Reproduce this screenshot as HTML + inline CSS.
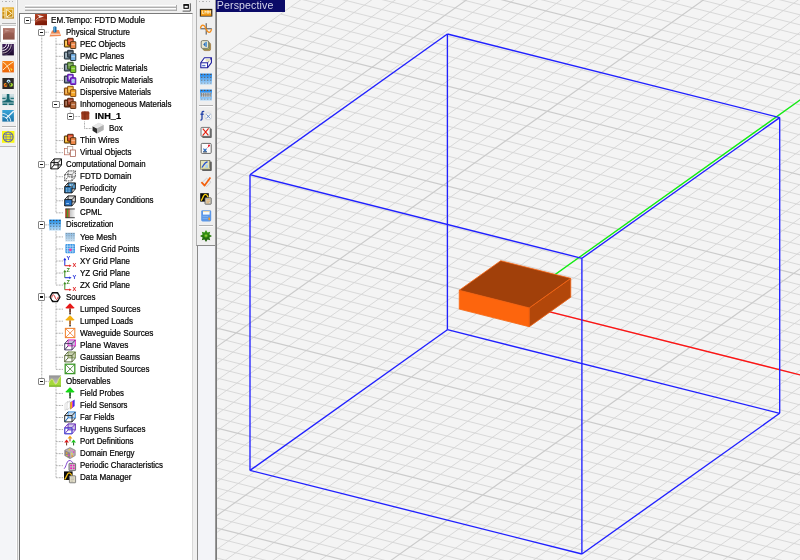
<!DOCTYPE html>
<html><head><meta charset="utf-8"><title>EM.Tempo</title><style>
html,body{margin:0;padding:0}
body{width:800px;height:560px;overflow:hidden;position:relative;background:#f4f4f4;font-family:"Liberation Sans",sans-serif}
div{position:absolute;box-sizing:border-box}
#ltb{left:0;top:0;width:16px;height:147px;background:#f0f0f0;border-bottom:1px solid #b9b9b9}
#ltb2{left:0;top:147px;width:16px;height:413px;background:#f4f5f8}
#lsep{left:16px;top:0;width:2.2px;height:560px;background:linear-gradient(90deg,#fdfdfd 0,#fdfdfd 50%,#c2c2c2 62%,#c2c2c2 100%)}
#tp{left:18px;top:0;width:179px;height:560px;background:#f0f0f0}
#tw{left:19.4px;top:13px;width:173.6px;height:560px;background:#fff;border-left:1.8px solid #727272;border-top:1.5px solid #7a7a7a;border-right:1px solid #d8d8d8}
#mtb{left:196px;top:0;width:20px;height:246px;background:#efefef;border-left:1.2px solid #b2b2b2;border-bottom:1.3px solid #8c8c8c}
#mtb2{left:196.6px;top:246px;width:19.4px;height:314px;background:#f3f4f8;border-left:1.5px solid #8a8a8a}
#vb{left:214.7px;top:0;width:2px;height:560px;background:linear-gradient(90deg,#a8a8a8,#6c6c6c)}
.grip{left:24.8px;width:152px;height:2.5px;background:linear-gradient(#fefefe 0%,#fefefe 38%,#b4b4b4 62%,#ababab 100%);border-right:1px solid #aaa}
.dots{height:1.4px;background:repeating-linear-gradient(90deg,#b4b4b4 0,#b4b4b4 1.2px,transparent 1.2px,transparent 3.4px)}
.sep{height:1.8px;background:linear-gradient(#b2b2b2 0,#b2b2b2 55%,#fcfcfc 56%)}
.eb{width:7.4px;height:7.4px;background:#fff;border:1.1px solid #858585;border-radius:1px;margin:-0.2px}
.eb i{position:absolute;left:1.1px;top:2px;width:3px;height:1.2px;background:#111}
.ic{width:12px;height:12px}
.ic svg{position:absolute;left:0;top:0;overflow:visible}
.tl{font-size:9px;line-height:12px;height:12px;white-space:pre;color:#000;-webkit-text-stroke:0.22px #000;transform-origin:0 50%}
.tl.b{font-weight:bold;color:#000}
#persp{left:216px;top:0;width:69px;height:11.7px;background:#0b0b68;color:#d4d4ea;filter:blur(0.25px);font-size:10.6px;line-height:11px;padding-left:0.8px;letter-spacing:0.12px;white-space:pre}
#tree{left:0;top:0;width:200px;height:560px;filter:blur(0.3px)}
#tbs{left:0;top:0;width:216px;height:560px;filter:blur(0.3px)}
#selbtn{left:0;top:25.4px;width:15.8px;height:16.2px;border-left:1px solid #b8b8b8;border-top:1.1px solid #cdcdcd;background:#fff}
</style></head><body>
<svg id="vp" width="800" height="560" viewBox="0 0 800 560" style="position:absolute;left:0;top:0">
<defs><clipPath id="vc"><rect x="217" y="0" width="583" height="560"/></clipPath></defs>
<g clip-path="url(#vc)" fill="none">
<path d="M-424.42 516.58L508.88 -148.52M-406.91 520.99L526.39 -144.11M-389.4 525.4L543.9 -139.7M-371.89 529.81L561.41 -135.29M-354.38 534.22L578.92 -130.88M-336.87 538.63L596.43 -126.47M-319.36 543.04L613.94 -122.06M-284.34 551.86L648.96 -113.24M-266.83 556.27L666.47 -108.83M-249.32 560.68L683.98 -104.42M-231.81 565.09L701.49 -100.01M-214.3 569.5L719 -95.6M-196.79 573.91L736.51 -91.19M-179.28 578.32L754.02 -86.78M-161.77 582.73L771.53 -82.37M-144.26 587.14L789.04 -77.96M-109.24 595.96L824.06 -69.14M-91.73 600.37L841.57 -64.73M-74.22 604.78L859.08 -60.32M-56.71 609.19L876.59 -55.91M-39.2 613.6L894.1 -51.5M-21.69 618.01L911.61 -47.09M-4.18 622.42L929.12 -42.68M13.33 626.83L946.63 -38.27M30.84 631.24L964.14 -33.86M65.86 640.06L999.16 -25.04M83.37 644.47L1016.67 -20.63M100.88 648.88L1034.18 -16.22M118.39 653.29L1051.69 -11.81M135.9 657.7L1069.2 -7.4M153.41 662.11L1086.71 -2.99M170.92 666.52L1104.22 1.42M188.43 670.93L1121.73 5.83M205.94 675.34L1139.24 10.24M240.96 684.16L1174.26 19.06M258.47 688.57L1191.77 23.47M275.98 692.98L1209.28 27.88M293.49 697.39L1226.79 32.29M311 701.8L1244.3 36.7M328.51 706.21L1261.81 41.11M346.02 710.62L1279.32 45.52M363.53 715.03L1296.83 49.93M381.04 719.44L1314.34 54.34M416.06 728.26L1349.36 63.16M433.57 732.67L1366.87 67.57M451.08 737.08L1384.38 71.98M468.59 741.49L1401.89 76.39M486.1 745.9L1419.4 80.8M503.61 750.31L1436.91 85.21M521.12 754.72L1454.42 89.62M538.63 759.13L1471.93 94.03M556.14 763.54L1489.44 98.44M591.16 772.36L1524.46 107.26M608.67 776.77L1541.97 111.67M626.18 781.18L1559.48 116.08M643.69 785.59L1576.99 120.49M661.2 790L1594.5 124.9M678.71 794.41L1612.01 129.31M696.22 798.82L1629.52 133.72M713.73 803.23L1647.03 138.13M731.24 807.64L1664.54 142.54M-424.42 516.58L748.75 812.05M-414.05 509.19L759.12 804.66M-403.68 501.8L769.49 797.27M-393.31 494.41L779.86 789.88M-382.94 487.02L790.23 782.49M-362.2 472.24L810.97 767.71M-351.83 464.85L821.34 760.32M-341.46 457.46L831.71 752.93M-331.09 450.07L842.08 745.54M-320.72 442.68L852.45 738.15M-310.35 435.29L862.82 730.76M-299.98 427.9L873.19 723.37M-289.61 420.51L883.56 715.98M-279.24 413.12L893.93 708.59M-258.5 398.34L914.67 693.81M-248.13 390.95L925.04 686.42M-237.76 383.56L935.41 679.03M-227.39 376.17L945.78 671.64M-217.02 368.78L956.15 664.25M-206.65 361.39L966.52 656.86M-196.28 354L976.89 649.47M-185.91 346.61L987.26 642.08M-175.54 339.22L997.63 634.69M-154.8 324.44L1018.37 619.91M-144.43 317.05L1028.74 612.52M-134.06 309.66L1039.11 605.13M-123.69 302.27L1049.48 597.74M-113.32 294.88L1059.85 590.35M-102.95 287.49L1070.22 582.96M-92.58 280.1L1080.59 575.57M-82.21 272.71L1090.96 568.18M-71.84 265.32L1101.33 560.79M-51.1 250.54L1122.07 546.01M-40.73 243.15L1132.44 538.62M-30.36 235.76L1142.81 531.23M-19.99 228.37L1153.18 523.84M-9.62 220.98L1163.55 516.45M0.75 213.59L1173.92 509.06M11.12 206.2L1184.29 501.67M21.49 198.81L1194.66 494.28M31.86 191.42L1205.03 486.89M52.6 176.64L1225.77 472.11M62.97 169.25L1236.14 464.72M73.34 161.86L1246.51 457.33M83.71 154.47L1256.88 449.94M94.08 147.08L1267.25 442.55M104.45 139.69L1277.62 435.16M114.82 132.3L1287.99 427.77M125.19 124.91L1298.36 420.38M135.56 117.52L1308.73 412.99M156.3 102.74L1329.47 398.21M166.67 95.35L1339.84 390.82M177.04 87.96L1350.21 383.43M187.41 80.57L1360.58 376.04M197.78 73.18L1370.95 368.65M208.15 65.79L1381.32 361.26M218.52 58.4L1391.69 353.87M228.89 51.01L1402.06 346.48M239.26 43.62L1412.43 339.09M260 28.84L1433.17 324.31M270.37 21.45L1443.54 316.92M280.74 14.06L1453.91 309.53M291.11 6.67L1464.28 302.14M301.48 -0.72L1474.65 294.75M311.85 -8.11L1485.02 287.36M322.22 -15.5L1495.39 279.97M332.59 -22.89L1505.76 272.58M342.96 -30.28L1516.13 265.19M363.7 -45.06L1536.87 250.41M374.07 -52.45L1547.24 243.02M384.44 -59.84L1557.61 235.63M394.81 -67.23L1567.98 228.24M405.18 -74.62L1578.35 220.85M415.55 -82.01L1588.72 213.46M425.92 -89.4L1599.09 206.07M436.29 -96.79L1609.46 198.68M446.66 -104.18L1619.83 191.29M467.4 -118.96L1640.57 176.51M477.77 -126.35L1650.94 169.12M488.14 -133.74L1661.31 161.73M498.51 -141.13L1671.68 154.34M508.88 -148.52L1682.05 146.95" stroke="#d3d3d3" stroke-width="0.85"/>
<path d="M-301.85 547.45L631.45 -117.65M-126.75 591.55L806.55 -73.55M48.35 635.65L981.65 -29.45M223.45 679.75L1156.75 14.65M398.55 723.85L1331.85 58.75M573.65 767.95L1506.95 102.85M748.75 812.05L1682.05 146.95M-372.57 479.63L800.6 775.1M-268.87 405.73L904.3 701.2M-165.17 331.83L1008 627.3M-61.47 257.93L1111.7 553.4M42.23 184.03L1215.4 479.5M145.93 110.13L1319.1 405.6M249.63 36.23L1422.8 331.7M353.33 -37.67L1526.5 257.8M457.03 -111.57L1630.2 183.9" stroke="#cbcbcb" stroke-width="1.15"/>
<path d="M515 303.1L929.8 7.5" stroke="#10f010" stroke-width="1.3"/>
<path d="M515 303.1L1215.4 479.5" stroke="#ff1212" stroke-width="1.4"/>
<path d="M447.4 34L447.4 329.7" stroke="#2020ff" stroke-width="1.35"/>
<path d="M250 174.7L250 470.4" stroke="#2020ff" stroke-width="1.35"/>
<path d="M779.7 117.6L779.7 413.3" stroke="#2020ff" stroke-width="1.35"/>
<path d="M581.9 258.3L581.9 554" stroke="#2020ff" stroke-width="1.35"/>
<path d="M447.4 34L250 174.7" stroke="#2020ff" stroke-width="1.35"/>
<path d="M447.4 34L779.7 117.6" stroke="#2020ff" stroke-width="1.35"/>
<path d="M250 174.7L581.9 258.3" stroke="#2020ff" stroke-width="1.35"/>
<path d="M779.7 117.6L581.9 258.3" stroke="#2020ff" stroke-width="1.35"/>
<path d="M447.4 329.7L250 470.4" stroke="#2020ff" stroke-width="1.35"/>
<path d="M447.4 329.7L779.7 413.3" stroke="#2020ff" stroke-width="1.35"/>
<path d="M250 470.4L581.9 554" stroke="#2020ff" stroke-width="1.35"/>
<path d="M779.7 413.3L581.9 554" stroke="#2020ff" stroke-width="1.35"/>
<path d="M459.24 290.26L529.28 307.9L529.28 326.7L459.24 309.06Z" fill="#fd650d" stroke="#fd650d" stroke-width="0.8" stroke-linejoin="round"/>
<path d="M529.28 307.9L570.76 278.34L570.76 297.14L529.28 326.7Z" fill="#b2470a" stroke="#f0600f" stroke-width="0.8" stroke-linejoin="round"/>
<path d="M459.24 290.26L529.28 307.9L570.76 278.34L500.72 260.7Z" fill="#a1400a" stroke="#f96310" stroke-width="0.8" stroke-linejoin="round"/>
</g>
</svg>
<div id="ltb"></div><div id="ltb2"></div><div id="lsep"></div>
<div id="tp"></div>
<div class="grip" style="top:5.2px"></div><div class="grip" style="top:8.3px"></div>
<svg width="10" height="10" viewBox="0 0 10 10" style="position:absolute;left:181.6px;top:2.9px"><rect x="0.4" y="0.3" width="8.2" height="7.9" fill="#fafafa"/><path d="M8.3 0.3V8.1H0.6" fill="none" stroke="#3c3c3c" stroke-width="0.9"/><rect x="2" y="2" width="4.3" height="3.3" fill="#fff" stroke="#000" stroke-width="1.1"/><rect x="1.45" y="1.2" width="5.4" height="1.3" fill="#000"/></svg>
<div id="tw"></div>
<div id="mtb"></div><div id="mtb2"></div>
<div id="vb"></div>
<div class="dots" style="left:2px;top:1px;width:13px"></div>
<div class="dots" style="left:199px;top:1px;width:14px"></div>
<div class="sep" style="left:1.5px;top:22.5px;width:14px"></div>
<div class="sep" style="left:1.5px;top:126px;width:14px"></div>
<div class="sep" style="left:199px;top:105px;width:14px"></div>
<div class="sep" style="left:199px;top:225.3px;width:14px"></div>
<div id="selbtn"></div>
<div id="tbs"><div class="ic" style="left:2px;top:6.6px"><svg width="12" height="12" viewBox="0 0 12 12"><defs><linearGradient id="l1" x1="0" y1="0" x2="0" y2="1"><stop offset="0" stop-color="#e8a818"/><stop offset="1" stop-color="#b87c08"/></linearGradient></defs><rect x="0.3" y="0.4" width="11.6" height="11.2" fill="url(#l1)"/><path d="M3 0.4V11.6" stroke="#fbe8b0" stroke-width="1.2"/><path d="M4.4 2L10.8 2.2V10L4.6 10.4Z" fill="none" stroke="#fbecc0" stroke-width="0.9"/><path d="M4.6 2.4L9.6 6.4L4.8 10" fill="none" stroke="#fff4d8" stroke-width="1"/><path d="M0.4 4.4H3M0.4 8H3" stroke="#fbe8b0" stroke-width="0.7"/></svg></div>
<div class="ic" style="left:2px;top:28.4px"><svg width="12" height="12" viewBox="0 0 12 12"><defs><linearGradient id="l2" x1="0" y1="0" x2="0" y2="1"><stop offset="0" stop-color="#a8685c"/><stop offset="1" stop-color="#8c5448"/></linearGradient></defs><rect x="1" y="0.2" width="11.6" height="11.4" fill="url(#l2)"/><path d="M3 1.4L8 2.4L3.4 3.6Z" fill="#e8d0c8"/><path d="M1 6.6C4 4 7 3.6 12.6 4.8V0.2H1Z" fill="#b47c70" opacity=".7"/></svg></div>
<div class="ic" style="left:2px;top:44.2px"><svg width="12" height="12" viewBox="0 0 12 12"><defs><linearGradient id="l3" x1="0" y1="0" x2="0" y2="1"><stop offset="0" stop-color="#3c1c58"/><stop offset="1" stop-color="#1c0c2c"/></linearGradient></defs><rect x="0.3" y="0" width="11.6" height="11.4" fill="url(#l3)"/><g fill="none" stroke="#f4f0f8" stroke-width="1"><path d="M0.4 4.2C2.6 4 4.2 2.4 4.4 0.2"/><path d="M0.4 6.6C4 6.4 6.6 3.8 6.8 0.2"/><path d="M0.6 9C5.4 8.8 9 5 9.2 0.4" stroke="#c8c0c0"/><path d="M0.8 11.2C6.8 11 11.2 6.4 11.4 0.6" stroke="#5c4c70" stroke-width="0.7"/></g></svg></div>
<div class="ic" style="left:2px;top:60.8px"><svg width="12" height="12" viewBox="0 0 12 12"><defs><linearGradient id="l4" x1="0" y1="0" x2="0" y2="1"><stop offset="0" stop-color="#f88418"/><stop offset="1" stop-color="#ec6408"/></linearGradient></defs><rect x="0.3" y="0" width="11.6" height="11.4" fill="url(#l4)"/><path d="M0.6 1C4 3 6 5 8 10.8M11.6 0.6C8 3 5 5 1 9" stroke="#fff0c8" stroke-width="1" fill="none"/><path d="M8.4 6.4L10.6 8.4L9 10Z" fill="#f8e040"/></svg></div>
<div class="ic" style="left:2px;top:77.8px"><svg width="12" height="12" viewBox="0 0 12 12"><rect x="0.4" y="0" width="11.4" height="11" fill="#2c2828"/><circle cx="6.6" cy="3.4" r="1.9" fill="#b8e4f8"/><circle cx="3.6" cy="7" r="1.9" fill="#f4a020"/><circle cx="3" cy="7.4" r="1" fill="#e84818"/><circle cx="9" cy="6.8" r="1.9" fill="#a8e030"/><path d="M6.6 3.4L3.6 7H9Z" fill="none" stroke="#181818" stroke-width="0.8"/></svg></div>
<div class="ic" style="left:2px;top:94.2px"><svg width="12" height="12" viewBox="0 0 12 12"><rect x="0.3" y="0" width="11.6" height="11.2" fill="#a8c8cc"/><path d="M0.3 0H11.9V2.6H0.3Z" fill="#d0e0e4"/><path d="M4.8 0H7.4V4.6C7.6 6.4 9.4 7.2 11.9 7.4V8.6H0.3V7.4C2.8 7.2 4.6 6.4 4.8 4.6Z" fill="#186870"/><path d="M0.3 4.4H3.6M8.6 4.4H11.9" stroke="#186870" stroke-width="1"/><path d="M0.6 10.2H5.2M6.8 10.2H11.6" stroke="#186870" stroke-width="1.6"/></svg></div>
<div class="ic" style="left:2px;top:110.2px"><svg width="12" height="12" viewBox="0 0 12 12"><defs><linearGradient id="l7" x1="0" y1="0" x2="0" y2="1"><stop offset="0" stop-color="#38a4d8"/><stop offset="1" stop-color="#1c74a8"/></linearGradient></defs><rect x="0.3" y="0" width="11.6" height="11.6" fill="url(#l7)"/><g fill="none" stroke="#e8f4fc"><path d="M0.4 3.4C4 3.4 8.6 7 8.8 11.4" stroke-width="1"/><path d="M0.4 6.4C3 6.4 5.8 8.6 6 11.4" stroke-width="0.9"/><path d="M11.8 1L4 8.4" stroke-width="1.4"/></g></svg></div>
<div class="ic" style="left:2px;top:131.2px"><svg width="12" height="12" viewBox="0 0 12 12"><rect x="0" y="0" width="12.4" height="11.8" fill="#f8f810"/><circle cx="6.2" cy="5.9" r="4.9" fill="none" stroke="#5c64a8" stroke-width="1.1"/><ellipse cx="6.2" cy="5.9" rx="2.2" ry="4.9" fill="none" stroke="#7c84b8" stroke-width="0.8"/><path d="M1.4 5.9H11M2.2 3.4H10.2M2.2 8.4H10.2" stroke="#6c74b0" stroke-width="0.8"/></svg></div>
<div class="ic" style="left:200px;top:9px"><svg width="12" height="12" viewBox="0 0 12 12"><rect x="0.4" y="0.4" width="11.4" height="6.6" fill="#f4a420" stroke="#241c10" stroke-width="1.1"/><path d="M2.4 1.6V4.6H3.8M5 4.6V1.8L6.2 3.4L7.4 1.8V4.6M8.4 4.6V1.8L9.4 3.4L10.4 1.8V4.6" fill="none" stroke="#fdf0d0" stroke-width="0.8"/><rect x="0.8" y="5.6" width="10.6" height="1.2" fill="#e88c10"/></svg></div>
<div class="ic" style="left:200px;top:23px"><svg width="12" height="12" viewBox="0 0 12 12"><path d="M0.4 5.8H11.8M6.2 0.2V11.6" stroke="#383838" stroke-width="0.9"/><path d="M0.4 5.4C1.4 1 4 1 6 5.8S10.6 10.4 11.6 6.2" fill="none" stroke="#f48c18" stroke-width="1.3"/></svg></div>
<div class="ic" style="left:200px;top:40px"><svg width="12" height="12" viewBox="0 0 12 12"><rect x="3.4" y="3" width="7.2" height="7.6" rx="1.4" fill="#c89448" stroke="#8c6830" stroke-width="0.6"/><rect x="2.4" y="2" width="7.2" height="7.6" rx="1.4" fill="#a8b868" stroke="#707840" stroke-width="0.6"/><rect x="1.2" y="0.6" width="7.4" height="7.8" rx="1.4" fill="#e8e8d0" stroke="#787868" stroke-width="0.9"/><path d="M5.6 1.8L3.2 4.4L5.6 7Z" fill="#2c6cb8"/><rect x="5.8" y="1.8" width="1.2" height="5.2" fill="#58a0d8"/></svg></div>
<div class="ic" style="left:200px;top:56.6px"><svg width="12" height="12" viewBox="0 0 12 12"><path d="M4.4 0.8H11.4V5.6L7.6 10.8H0.8V5.8Z" fill="#fff" stroke="#1c1c9c" stroke-width="1.1" stroke-linejoin="round"/><path d="M0.8 5.8H7.6V10.8M7.6 5.8L11.4 0.8" fill="none" stroke="#1c1c9c" stroke-width="1"/><rect x="5.6" y="2" width="4.6" height="2.6" fill="#e8e4c0"/><path d="M2.2 8.6H5.4" stroke="#5878d0" stroke-width="1.4"/></svg></div>
<div class="ic" style="left:200px;top:72.8px"><svg width="12" height="12" viewBox="0 0 12 12"><defs><linearGradient id="gm1" x1="0" y1="0" x2="0" y2="1"><stop offset="0" stop-color="#1484f0"/><stop offset="1" stop-color="#b8dcf8"/></linearGradient></defs><rect x="0" y="0.6" width="12" height="11" fill="url(#gm1)"/><rect x="1.1" y="0.9" width="1.2" height="1.1" fill="#6c4c34" opacity="1.0"/><rect x="4.1" y="0.9" width="1.2" height="1.1" fill="#6c4c34" opacity="1.0"/><rect x="7.1" y="0.9" width="1.2" height="1.1" fill="#6c4c34" opacity="1.0"/><rect x="10.1" y="0.9" width="1.2" height="1.1" fill="#6c4c34" opacity="1.0"/><rect x="1.1" y="3.8" width="1.2" height="1.1" fill="#6c4c34" opacity="0.8"/><rect x="4.1" y="3.8" width="1.2" height="1.1" fill="#6c4c34" opacity="0.8"/><rect x="7.1" y="3.8" width="1.2" height="1.1" fill="#6c4c34" opacity="0.8"/><rect x="10.1" y="3.8" width="1.2" height="1.1" fill="#6c4c34" opacity="0.8"/><rect x="1.1" y="6.7" width="1.2" height="1.1" fill="#6c4c34" opacity="0.6"/><rect x="4.1" y="6.7" width="1.2" height="1.1" fill="#6c4c34" opacity="0.6"/><rect x="7.1" y="6.7" width="1.2" height="1.1" fill="#6c4c34" opacity="0.6"/><rect x="10.1" y="6.7" width="1.2" height="1.1" fill="#6c4c34" opacity="0.6"/><rect x="1.1" y="9.6" width="1.2" height="1.1" fill="#6c4c34" opacity="0.3999999999999999"/><rect x="4.1" y="9.6" width="1.2" height="1.1" fill="#6c4c34" opacity="0.3999999999999999"/><rect x="7.1" y="9.6" width="1.2" height="1.1" fill="#6c4c34" opacity="0.3999999999999999"/><rect x="10.1" y="9.6" width="1.2" height="1.1" fill="#6c4c34" opacity="0.3999999999999999"/></svg></div>
<div class="ic" style="left:200px;top:89.2px"><svg width="12" height="12" viewBox="0 0 12 12"><defs><linearGradient id="gm2" x1="0" y1="0" x2="0" y2="1"><stop offset="0" stop-color="#1484f0"/><stop offset="1" stop-color="#b8dcf8"/></linearGradient></defs><rect x="0" y="0.6" width="12" height="11" fill="url(#gm2)"/><rect x="1.1" y="0.9" width="1.2" height="1.1" fill="#6c4c34" opacity="1.0"/><rect x="4.1" y="0.9" width="1.2" height="1.1" fill="#6c4c34" opacity="1.0"/><rect x="7.1" y="0.9" width="1.2" height="1.1" fill="#6c4c34" opacity="1.0"/><rect x="10.1" y="0.9" width="1.2" height="1.1" fill="#6c4c34" opacity="1.0"/><rect x="1.1" y="3.8" width="1.2" height="1.1" fill="#6c4c34" opacity="0.8"/><rect x="4.1" y="3.8" width="1.2" height="1.1" fill="#6c4c34" opacity="0.8"/><rect x="7.1" y="3.8" width="1.2" height="1.1" fill="#6c4c34" opacity="0.8"/><rect x="10.1" y="3.8" width="1.2" height="1.1" fill="#6c4c34" opacity="0.8"/><rect x="1.1" y="6.7" width="1.2" height="1.1" fill="#6c4c34" opacity="0.6"/><rect x="4.1" y="6.7" width="1.2" height="1.1" fill="#6c4c34" opacity="0.6"/><rect x="7.1" y="6.7" width="1.2" height="1.1" fill="#6c4c34" opacity="0.6"/><rect x="10.1" y="6.7" width="1.2" height="1.1" fill="#6c4c34" opacity="0.6"/><rect x="1.1" y="9.6" width="1.2" height="1.1" fill="#6c4c34" opacity="0.3999999999999999"/><rect x="4.1" y="9.6" width="1.2" height="1.1" fill="#6c4c34" opacity="0.3999999999999999"/><rect x="7.1" y="9.6" width="1.2" height="1.1" fill="#6c4c34" opacity="0.3999999999999999"/><rect x="10.1" y="9.6" width="1.2" height="1.1" fill="#6c4c34" opacity="0.3999999999999999"/><rect x="0.6" y="3.6" width="10.8" height="4.4" fill="#c8d0d8" opacity=".85"/><path d="M1.4 4V7.6M3.6 4V7.6M5.8 4V7.6M8 4V7.6M10.2 4V7.6" stroke="#787068" stroke-width="0.8"/><path d="M1.4 5.8H10.4" stroke="#8c8478" stroke-width="0.6"/></svg></div>
<div class="ic" style="left:200px;top:110.4px"><svg width="12" height="12" viewBox="0 0 12 12"><rect x="0.2" y="0.4" width="11.6" height="10" fill="#e9e9e9" opacity=".8"/><path d="M4.2 1.6C2.8 1 2 1.8 2 3V8.6C2 9.8 1.4 10.2 0.4 9.8M0.5 4.2H3.6" fill="none" stroke="#2444a8" stroke-width="1.35"/><rect x="5" y="3" width="6.6" height="6.6" rx="2.6" fill="#f6f6f6" stroke="#c0c8d0" stroke-width="0.6"/><path d="M6.4 4.4L10.2 8.4M10.2 4.4L6.4 8.4" stroke="#5c84c4" stroke-width="0.9"/></svg></div>
<div class="ic" style="left:200px;top:126.8px"><svg width="12" height="12" viewBox="0 0 12 12"><rect x="2.2" y="1.6" width="9.6" height="9.4" rx="1" fill="#686868"/><rect x="1" y="0.4" width="9.2" height="9" rx="0.8" fill="#f4f8f8" stroke="#585858" stroke-width="0.8"/><path d="M2.8 1.6L8.4 8.4M8.6 1.4L2.6 8.6" stroke="#e42010" stroke-width="1.1"/></svg></div>
<div class="ic" style="left:200px;top:143.4px"><svg width="12" height="12" viewBox="0 0 12 12"><rect x="1.2" y="0.4" width="10" height="10" rx="1" fill="#fcfcfc" stroke="#686868" stroke-width="1"/><path d="M3.4 5.6L6.6 9M6.6 5.6L3.4 9" stroke="#2c6cc0" stroke-width="1.1"/><rect x="3.4" y="8.6" width="3.2" height="0.8" fill="#303030"/><circle cx="9" cy="2.6" r="1" fill="#e81828"/><path d="M7.6 4.6L9.4 2.6" stroke="#e81828" stroke-width="0.9"/></svg></div>
<div class="ic" style="left:200px;top:159.6px"><svg width="12" height="12" viewBox="0 0 12 12"><rect x="2" y="1.6" width="9.8" height="9.4" rx="1" fill="#606060"/><rect x="0.6" y="0.4" width="9.2" height="8.8" fill="#e4e4b8" stroke="#70705c" stroke-width="0.8"/><path d="M1.8 7.6C3.4 6 4.4 2 7.6 1.8" stroke="#2c54d0" stroke-width="1.2" fill="none"/><rect x="5.4" y="4.6" width="2.6" height="3.4" fill="#a8d0f0"/><rect x="0.6" y="7.8" width="9.2" height="1.2" fill="#d0d098"/></svg></div>
<div class="ic" style="left:200px;top:176.8px"><svg width="12" height="12" viewBox="0 0 12 12"><path d="M6.6 1.2L11 5.2L6.6 9.6L2.4 5.2Z" fill="#ececec" stroke="#b8b8c0" stroke-width="0.6"/><path d="M1.4 5.2L4.6 8.6L10.4 0.6" fill="none" stroke="#f4600c" stroke-width="1.7" stroke-linejoin="round"/></svg></div>
<div class="ic" style="left:200px;top:192.8px"><svg width="12" height="12" viewBox="0 0 12 12"><rect x="0.2" y="0.2" width="8.6" height="8.4" fill="#080808"/><path d="M1 7.6C2.6 6.6 3.2 1.4 5.2 1.4S7.6 3 8.2 4.4" stroke="#f8d010" stroke-width="1.4" fill="none"/><rect x="5" y="4.8" width="6.2" height="6.4" rx="0.5" fill="#d8d4c4" stroke="#505050" stroke-width="0.8"/><path d="M6.4 6.6H10M6.4 8.2H10M6.4 9.8H9" stroke="#e89838" stroke-width="0.6"/></svg></div>
<div class="ic" style="left:200px;top:209.6px"><svg width="12" height="12" viewBox="0 0 12 12"><rect x="1.2" y="0.2" width="10" height="11.2" rx="1.4" fill="#5c98e8"/><rect x="3" y="1.2" width="6.6" height="3.4" fill="#f8fcff"/><path d="M3 1.6H9.6" stroke="#f4c878" stroke-width="0.7"/><rect x="8.4" y="7.6" width="1.6" height="2.6" fill="#f49820"/><path d="M2.6 6.4H8M2.6 8.4H7.6" stroke="#88b8f0" stroke-width="0.8"/></svg></div>
<div class="ic" style="left:200px;top:230.4px"><svg width="12" height="12" viewBox="0 0 12 12"><defs><linearGradient id="ms" x1="0" y1="0" x2="0" y2="1"><stop offset="0" stop-color="#3ca018"/><stop offset="1" stop-color="#185808"/></linearGradient></defs><path d="M6 0L7.5 2.6L10.2 1.8L9.4 4.5L12 6L9.4 7.5L10.2 10.2L7.5 9.4L6 12L4.5 9.4L1.8 10.2L2.6 7.5L0 6L2.6 4.5L1.8 1.8L4.5 2.6Z" fill="url(#ms)"/><circle cx="6" cy="5.8" r="1.8" fill="#58b020"/><circle cx="6" cy="5.8" r="0.7" fill="#c0e048"/></svg></div></div>
<div id="tree"><svg width="200" height="560" viewBox="0 0 200 560" style="position:absolute;left:0;top:0"><path d="M41.75 26L41.75 381.4M56 38.24L56 152.64M56 44.28L63.5 44.28M56 56.32L63.5 56.32M56 68.36L63.5 68.36M56 80.4L63.5 80.4M56 92.44L63.5 92.44M56 104.48L63.5 104.48M56 140.6L63.5 140.6M56 152.64L63.5 152.64M56 170.68L56 212.84M56 176.72L63.5 176.72M56 188.76L63.5 188.76M56 200.8L63.5 200.8M56 212.84L63.5 212.84M56 230.88L56 285.08M56 236.92L63.5 236.92M56 248.96L63.5 248.96M56 261L63.5 261M56 273.04L63.5 273.04M56 285.08L63.5 285.08M56 303.12L56 369.36M56 309.16L63.5 309.16M56 321.2L63.5 321.2M56 333.24L63.5 333.24M56 345.28L63.5 345.28M56 357.32L63.5 357.32M56 369.36L63.5 369.36M56 387.4L56 477.72M56 393.44L63.5 393.44M56 405.48L63.5 405.48M56 417.52L63.5 417.52M56 429.56L63.5 429.56M56 441.6L63.5 441.6M56 453.64L63.5 453.64M56 465.68L63.5 465.68M56 477.72L63.5 477.72M41.75 32.24L49 32.24M41.75 164.68L49 164.68M41.75 224.88L49 224.88M41.75 297.12L49 297.12M41.75 381.4L49 381.4M31 20.2L35 20.2M70.25 110.48L70.25 116.52M70.25 116.52L80 116.52M84.5 121.52L84.5 128.56M84.5 128.56L91.5 128.56" stroke="#9c9c9c" stroke-width="1" stroke-dasharray="0.8 0.7" fill="none"/></svg>
<div class="eb" style="left:24px;top:16.7px"><i></i></div>
<div class="ic" style="left:35px;top:13.9px"><svg width="12" height="12" viewBox="0 0 12 12"><defs><linearGradient id="ge" x1="0" y1="0" x2="0.3" y2="1"><stop offset="0" stop-color="#b84828"/><stop offset="0.5" stop-color="#982c14"/><stop offset="1" stop-color="#7c1a08"/></linearGradient></defs><g transform="translate(0,0)"><rect x="0" y="0" width="12" height="11.2" fill="url(#ge)"/><path d="M0 7.4C3 4.4 6.5 3.6 12 5V7C7 5.4 3.6 6 0 9Z" fill="#b45a40" opacity=".75"/><path d="M2.2 0.8L9 2.6L3.4 4.2L4.2 2.8Z" fill="#f8ece8"/><path d="M3.6 3.6L0.6 6.2" stroke="#e8c8bc" stroke-width="0.8"/></g></svg></div>
<div class="tl" style="left:51px;top:13.8px;transform:scaleX(0.9036)">EM.Tempo: FDTD Module</div>
<div class="eb" style="left:38.25px;top:28.74px"><i></i></div>
<div class="ic" style="left:49.25px;top:25.94px"><svg width="12" height="12" viewBox="0 0 12 12"><path d="M3 4.5L10 4L12 10L0.5 10.5Z" fill="#f08850"/><path d="M1.5 8.2H10.8" stroke="#fbe0d0" stroke-width="1.2"/><rect x="4.3" y="0.5" width="3.2" height="6" rx="1" fill="#1c6ca8"/><rect x="5" y="0.8" width="1" height="5" fill="#58a8d8"/></svg></div>
<div class="tl" style="left:65.5px;top:25.84px;transform:scaleX(0.8824)">Physical Structure</div>
<div class="ic" style="left:63.5px;top:37.98px"><svg width="12" height="12" viewBox="0 0 12 12"><rect x="0.4" y="2" width="5.6" height="7" rx="0.3" fill="#f4b01c" stroke="#3a2408" stroke-width="1"/><rect x="1.4" y="3" width="1.6" height="4.6" fill="#fff" opacity=".35"/><rect x="3.6" y="0.3" width="5.6" height="6.8" rx="0.3" fill="#e4502c" stroke="#4a1c08" stroke-width="0.9"/><rect x="4.4" y="2.4" width="4" height="1.2" fill="#fff" opacity=".4"/><rect x="6.6" y="3.7" width="5.2" height="6.8" rx="0.3" fill="#f08848" stroke="#4a2c0c" stroke-width="0.9"/><rect x="7.4" y="6" width="3.6" height="1.2" fill="#fff" opacity=".4"/></svg></div>
<div class="tl" style="left:79.5px;top:37.88px;transform:scaleX(0.8830)">PEC Objects</div>
<div class="ic" style="left:63.5px;top:50.02px"><svg width="12" height="12" viewBox="0 0 12 12"><rect x="0.4" y="2" width="5.6" height="7" rx="0.3" fill="#7890a0" stroke="#1c2830" stroke-width="1"/><rect x="1.4" y="3" width="1.6" height="4.6" fill="#fff" opacity=".35"/><rect x="3.6" y="0.3" width="5.6" height="6.8" rx="0.3" fill="#485868" stroke="#1c2830" stroke-width="0.9"/><rect x="4.4" y="2.4" width="4" height="1.2" fill="#fff" opacity=".4"/><rect x="6.6" y="3.7" width="5.2" height="6.8" rx="0.3" fill="#78b4e8" stroke="#1c2830" stroke-width="0.9"/><rect x="7.4" y="6" width="3.6" height="1.2" fill="#fff" opacity=".4"/></svg></div>
<div class="tl" style="left:79.5px;top:49.92px;transform:scaleX(0.8844)">PMC Planes</div>
<div class="ic" style="left:63.5px;top:62.06px"><svg width="12" height="12" viewBox="0 0 12 12"><rect x="0.4" y="2" width="5.6" height="7" rx="0.3" fill="#68788c" stroke="#1c2c30" stroke-width="1"/><rect x="1.4" y="3" width="1.6" height="4.6" fill="#fff" opacity=".35"/><rect x="3.6" y="0.3" width="5.6" height="6.8" rx="0.3" fill="#6c9c48" stroke="#2c4c1c" stroke-width="0.9"/><rect x="4.4" y="2.4" width="4" height="1.2" fill="#fff" opacity=".4"/><rect x="6.6" y="3.7" width="5.2" height="6.8" rx="0.3" fill="#7cc824" stroke="#2c4c1c" stroke-width="0.9"/><rect x="7.4" y="6" width="3.6" height="1.2" fill="#fff" opacity=".4"/></svg></div>
<div class="tl" style="left:79.5px;top:61.96px;transform:scaleX(0.8878)">Dielectric Materials</div>
<div class="ic" style="left:63.5px;top:74.1px"><svg width="12" height="12" viewBox="0 0 12 12"><rect x="0.4" y="2" width="5.6" height="7" rx="0.3" fill="#60708c" stroke="#1c2430" stroke-width="1"/><rect x="1.4" y="3" width="1.6" height="4.6" fill="#fff" opacity=".35"/><rect x="3.6" y="0.3" width="5.6" height="6.8" rx="0.3" fill="#8030d8" stroke="#5010a0" stroke-width="0.9"/><rect x="4.4" y="2.4" width="4" height="1.2" fill="#fff" opacity=".4"/><rect x="4.8" y="1.6" width="3.2" height="3.8" fill="#d8d0f0"/><rect x="6.6" y="3.7" width="5.2" height="6.8" rx="0.3" fill="#8838e0" stroke="#5010a0" stroke-width="0.9"/><rect x="7.4" y="6" width="3.6" height="1.2" fill="#fff" opacity=".4"/><rect x="7.7" y="5" width="3" height="4" fill="#a8c8f0"/></svg></div>
<div class="tl" style="left:79.5px;top:74px;transform:scaleX(0.8739)">Anisotropic Materials</div>
<div class="ic" style="left:63.5px;top:86.14px"><svg width="12" height="12" viewBox="0 0 12 12"><rect x="0.4" y="2" width="5.6" height="7" rx="0.3" fill="#e89420" stroke="#703808" stroke-width="1"/><rect x="1.4" y="3" width="1.6" height="4.6" fill="#fff" opacity=".35"/><rect x="3.6" y="0.3" width="5.6" height="6.8" rx="0.3" fill="#f4b838" stroke="#804008" stroke-width="0.9"/><rect x="4.4" y="2.4" width="4" height="1.2" fill="#fff" opacity=".4"/><rect x="6.6" y="3.7" width="5.2" height="6.8" rx="0.3" fill="#f4a424" stroke="#804008" stroke-width="0.9"/><rect x="7.4" y="6" width="3.6" height="1.2" fill="#fff" opacity=".4"/></svg></div>
<div class="tl" style="left:79.5px;top:86.04px;transform:scaleX(0.8762)">Dispersive Materials</div>
<div class="eb" style="left:52.5px;top:100.98px"><i></i></div>
<div class="ic" style="left:63.5px;top:98.18px"><svg width="12" height="12" viewBox="0 0 12 12"><rect x="0.4" y="2" width="5.6" height="7" rx="0.3" fill="#7c3410" stroke="#3c1404" stroke-width="1"/><rect x="1.4" y="3" width="1.6" height="4.6" fill="#fff" opacity=".35"/><rect x="3.6" y="0.3" width="5.6" height="6.8" rx="0.3" fill="#a8442c" stroke="#4c1c08" stroke-width="0.9"/><rect x="4.4" y="2.4" width="4" height="1.2" fill="#fff" opacity=".4"/><rect x="6.6" y="3.7" width="5.2" height="6.8" rx="0.3" fill="#b86838" stroke="#5c2808" stroke-width="0.9"/><rect x="7.4" y="6" width="3.6" height="1.2" fill="#fff" opacity=".4"/></svg></div>
<div class="tl" style="left:79.5px;top:98.08px;transform:scaleX(0.8835)">Inhomogeneous Materials</div>
<div class="eb" style="left:66.75px;top:113.02px"><i></i></div>
<div class="ic" style="left:80.5px;top:110.22px"><svg width="12" height="12" viewBox="0 0 12 12"><rect x="0.3" y="1.5" width="8" height="8.2" rx="1.2" fill="#9c3c20"/><rect x="3.4" y="1.5" width="1" height="8.2" fill="#7c2c14"/><rect x="0.3" y="1.5" width="8" height="3" rx="1.2" fill="#8a3018" opacity=".6"/></svg></div>
<div class="tl b" style="left:94.5px;top:110.12px;transform:scaleX(1.0190)">INH_1</div>
<div class="ic" style="left:92px;top:122.26px"><svg width="12" height="12" viewBox="0 0 12 12"><path d="M0.6 4.2L6.8 0.8L11.6 3L11.6 8L5 11.4L0.6 8.8Z" fill="#d4d4d4"/><path d="M0.6 4.2L5 6.4V11.4L0.6 8.8Z" fill="#2c2c2c"/><path d="M0.6 4.2L6.8 0.8L11.6 3L5 6.4Z" fill="#e8e8e8"/><path d="M5 6.4L11.6 3V8L5 11.4Z" fill="#b0b0b0"/></svg></div>
<div class="tl" style="left:108.75px;top:122.16px;transform:scaleX(0.8862)">Box</div>
<div class="ic" style="left:63.5px;top:134.3px"><svg width="12" height="12" viewBox="0 0 12 12"><rect x="0.4" y="2" width="5.6" height="7" rx="0.3" fill="#f4b01c" stroke="#3a2408" stroke-width="1"/><rect x="1.4" y="3" width="1.6" height="4.6" fill="#fff" opacity=".35"/><rect x="3.6" y="0.3" width="5.6" height="6.8" rx="0.3" fill="#e4502c" stroke="#4a1c08" stroke-width="0.9"/><rect x="4.4" y="2.4" width="4" height="1.2" fill="#fff" opacity=".4"/><rect x="6.6" y="3.7" width="5.2" height="6.8" rx="0.3" fill="#f08848" stroke="#4a2c0c" stroke-width="0.9"/><rect x="7.4" y="6" width="3.6" height="1.2" fill="#fff" opacity=".4"/></svg></div>
<div class="tl" style="left:79.5px;top:134.2px;transform:scaleX(0.9066)">Thin Wires</div>
<div class="ic" style="left:63.5px;top:146.34px"><svg width="12" height="12" viewBox="0 0 12 12"><rect x="0.5" y="2.4" width="5" height="6.4" fill="#fff" stroke="#b86858" stroke-width="0.7"/><rect x="3.6" y="0.5" width="5.2" height="6.4" fill="#fff" stroke="#a89088" stroke-width="0.7"/><rect x="6.3" y="4" width="5.2" height="6.6" fill="#fff" stroke="#a05040" stroke-width="0.7"/></svg></div>
<div class="tl" style="left:79.5px;top:146.24px;transform:scaleX(0.8825)">Virtual Objects</div>
<div class="eb" style="left:38.25px;top:161.18px"><i></i></div>
<div class="ic" style="left:49.25px;top:158.38px"><svg width="12" height="12" viewBox="0 0 12 12"><g transform="translate(1.1,0)"><path d="M4 0.9H11.4V6.9H4Z" fill="#f0f0f0" stroke="#111" stroke-width="1"/><path d="M0.7 4.6L4 0.9M8 4.6L11.4 0.9M8 10.9L11.4 6.9M0.7 10.9L4 6.9" fill="none" stroke="#111" stroke-width="1"/><path d="M0.7 4.6H8V10.9H0.7Z" fill="none" stroke="#111" stroke-width="1"/></g></svg></div>
<div class="tl" style="left:65.5px;top:158.28px;transform:scaleX(0.8684)">Computational Domain</div>
<div class="ic" style="left:63.5px;top:170.42px"><svg width="12" height="12" viewBox="0 0 12 12"><path d="M4 0.9H11.4V6.9H4Z" fill="#f0f0f0" stroke="#444" stroke-width="0.9" stroke-dasharray="1.6 0.7"/><path d="M0.7 4.6L4 0.9M8 4.6L11.4 0.9M8 10.9L11.4 6.9M0.7 10.9L4 6.9" fill="none" stroke="#444" stroke-width="0.9" stroke-dasharray="1.6 0.7"/><path d="M0.7 4.6H8V10.9H0.7Z" fill="none" stroke="#444" stroke-width="0.9" stroke-dasharray="1.6 0.7"/></svg></div>
<div class="tl" style="left:79.5px;top:170.32px;transform:scaleX(0.8954)">FDTD Domain</div>
<div class="ic" style="left:63.5px;top:182.46px"><svg width="12" height="12" viewBox="0 0 12 12"><path d="M4 0.9H11.4V6.9H4Z" fill="#58a0d4" stroke="#111" stroke-width="0.9"/><path d="M0.7 4.6L4 0.9M8 4.6L11.4 0.9M8 10.9L11.4 6.9M0.7 10.9L4 6.9" fill="none" stroke="#111" stroke-width="0.9"/><path d="M0.7 4.6H8V10.9H0.7Z" fill="#2878b8" stroke="#111" stroke-width="0.9"/><g fill="#e8f4fc"><rect x="2.2" y="6.4" width="1" height="1"/><rect x="4.6" y="6.4" width="1" height="1"/><rect x="2.2" y="8.6" width="1" height="1"/><rect x="4.6" y="8.6" width="1" height="1"/><rect x="6" y="2.6" width="1" height="1"/><rect x="8.4" y="2.6" width="1" height="1"/><rect x="6.6" y="4.4" width="1" height="1"/></g></svg></div>
<div class="tl" style="left:79.5px;top:182.36px;transform:scaleX(0.8792)">Periodicity</div>
<div class="ic" style="left:63.5px;top:194.5px"><svg width="12" height="12" viewBox="0 0 12 12"><path d="M4 0.9H11.4V6.9H4Z" fill="#d8d8d8" stroke="#111" stroke-width="0.9"/><path d="M0.7 4.6L4 0.9M8 4.6L11.4 0.9M8 10.9L11.4 6.9M0.7 10.9L4 6.9" fill="none" stroke="#111" stroke-width="0.9"/><path d="M0.7 4.6H8V10.9H0.7Z" fill="#2470c4" stroke="#111" stroke-width="0.9"/><path d="M2.2 8.6H5" stroke="#bfe0ff" stroke-width="0.8"/></svg></div>
<div class="tl" style="left:79.5px;top:194.4px;transform:scaleX(0.8796)">Boundary Conditions</div>
<div class="ic" style="left:63.5px;top:206.54px"><svg width="12" height="12" viewBox="0 0 12 12"><defs><linearGradient id="gc" x1="0" y1="0" x2="1" y2="0"><stop offset="0" stop-color="#9a9a9a"/><stop offset="1" stop-color="#f4f4f4"/></linearGradient></defs><rect x="1.4" y="1.8" width="9.4" height="9" fill="url(#gc)"/><rect x="1.4" y="1.8" width="1.5" height="9" fill="#b03818"/><rect x="2.9" y="1.8" width="1.4" height="9" fill="#48a028"/><rect x="4.3" y="1.8" width="1.3" height="9" fill="#b84820"/><rect x="1.4" y="1.5" width="9.4" height="0.9" fill="#333"/><rect x="1.4" y="10.3" width="9.4" height="0.9" fill="#333"/></svg></div>
<div class="tl" style="left:79.5px;top:206.44px;transform:scaleX(0.8795)">CPML</div>
<div class="eb" style="left:38.25px;top:221.38px"><i></i></div>
<div class="ic" style="left:49.25px;top:218.58px"><svg width="12" height="12" viewBox="0 0 12 12"><defs><linearGradient id="gd1" x1="0" y1="0" x2="0" y2="1"><stop offset="0" stop-color="#1c8ce8"/><stop offset="1" stop-color="#c4e2f8"/></linearGradient></defs><rect x="0" y="0.6" width="12" height="11" fill="url(#gd1)"/><rect x="1.1" y="0.9" width="1.2" height="1.1" fill="#3c3c3c" opacity="1.0"/><rect x="4.1" y="0.9" width="1.2" height="1.1" fill="#3c3c3c" opacity="1.0"/><rect x="7.1" y="0.9" width="1.2" height="1.1" fill="#3c3c3c" opacity="1.0"/><rect x="10.1" y="0.9" width="1.2" height="1.1" fill="#3c3c3c" opacity="1.0"/><rect x="1.1" y="3.8" width="1.2" height="1.1" fill="#3c3c3c" opacity="0.8"/><rect x="4.1" y="3.8" width="1.2" height="1.1" fill="#3c3c3c" opacity="0.8"/><rect x="7.1" y="3.8" width="1.2" height="1.1" fill="#3c3c3c" opacity="0.8"/><rect x="10.1" y="3.8" width="1.2" height="1.1" fill="#3c3c3c" opacity="0.8"/><rect x="1.1" y="6.7" width="1.2" height="1.1" fill="#3c3c3c" opacity="0.6"/><rect x="4.1" y="6.7" width="1.2" height="1.1" fill="#3c3c3c" opacity="0.6"/><rect x="7.1" y="6.7" width="1.2" height="1.1" fill="#3c3c3c" opacity="0.6"/><rect x="10.1" y="6.7" width="1.2" height="1.1" fill="#3c3c3c" opacity="0.6"/><rect x="1.1" y="9.6" width="1.2" height="1.1" fill="#3c3c3c" opacity="0.3999999999999999"/><rect x="4.1" y="9.6" width="1.2" height="1.1" fill="#3c3c3c" opacity="0.3999999999999999"/><rect x="7.1" y="9.6" width="1.2" height="1.1" fill="#3c3c3c" opacity="0.3999999999999999"/><rect x="10.1" y="9.6" width="1.2" height="1.1" fill="#3c3c3c" opacity="0.3999999999999999"/></svg></div>
<div class="tl" style="left:65.5px;top:218.48px;transform:scaleX(0.8791)">Discretization</div>
<div class="ic" style="left:63.5px;top:230.62px"><svg width="12" height="12" viewBox="0 0 12 12"><g transform="translate(1.3,1.3) scale(0.8)"><defs><linearGradient id="gd2" x1="0" y1="0" x2="0" y2="1"><stop offset="0" stop-color="#88b8e0"/><stop offset="1" stop-color="#d0e4f4"/></linearGradient></defs><rect x="0" y="0.6" width="12" height="11" fill="url(#gd2)"/><rect x="1.1" y="0.9" width="1.2" height="1.1" fill="#7c8488" opacity="1.0"/><rect x="4.1" y="0.9" width="1.2" height="1.1" fill="#7c8488" opacity="1.0"/><rect x="7.1" y="0.9" width="1.2" height="1.1" fill="#7c8488" opacity="1.0"/><rect x="10.1" y="0.9" width="1.2" height="1.1" fill="#7c8488" opacity="1.0"/><rect x="1.1" y="3.8" width="1.2" height="1.1" fill="#7c8488" opacity="0.8"/><rect x="4.1" y="3.8" width="1.2" height="1.1" fill="#7c8488" opacity="0.8"/><rect x="7.1" y="3.8" width="1.2" height="1.1" fill="#7c8488" opacity="0.8"/><rect x="10.1" y="3.8" width="1.2" height="1.1" fill="#7c8488" opacity="0.8"/><rect x="1.1" y="6.7" width="1.2" height="1.1" fill="#7c8488" opacity="0.6"/><rect x="4.1" y="6.7" width="1.2" height="1.1" fill="#7c8488" opacity="0.6"/><rect x="7.1" y="6.7" width="1.2" height="1.1" fill="#7c8488" opacity="0.6"/><rect x="10.1" y="6.7" width="1.2" height="1.1" fill="#7c8488" opacity="0.6"/><rect x="1.1" y="9.6" width="1.2" height="1.1" fill="#7c8488" opacity="0.3999999999999999"/><rect x="4.1" y="9.6" width="1.2" height="1.1" fill="#7c8488" opacity="0.3999999999999999"/><rect x="7.1" y="9.6" width="1.2" height="1.1" fill="#7c8488" opacity="0.3999999999999999"/><rect x="10.1" y="9.6" width="1.2" height="1.1" fill="#7c8488" opacity="0.3999999999999999"/></g></svg></div>
<div class="tl" style="left:79.5px;top:230.52px;transform:scaleX(0.9193)">Yee Mesh</div>
<div class="ic" style="left:63.5px;top:242.66px"><svg width="12" height="12" viewBox="0 0 12 12"><rect x="1.4" y="0.9" width="9.6" height="9.4" rx="1.2" fill="#3894e4"/><path d="M3.6 1.2V10M6.2 1.2V10M8.8 1.2V10M1.8 3.2H10.6M1.8 5.6H10.6M1.8 8H10.6" stroke="#d8ecfc" stroke-width="0.6"/><circle cx="6.4" cy="6.8" r="1.4" fill="#f838a0"/></svg></div>
<div class="tl" style="left:79.5px;top:242.56px;transform:scaleX(0.8619)">Fixed Grid Points</div>
<div class="ic" style="left:63.5px;top:254.7px"><svg width="12" height="12" viewBox="0 0 12 12"><path d="M0.8 10.7V4" stroke="#1c28d8" stroke-width="1" fill="none"/><path d="M0.8 2.8L2.3 5.2H-0.7Z" fill="#1c28d8"/><path d="M0.8 10.7H5.8" stroke="#e02020" stroke-width="1" fill="none"/><path d="M7.6 10.7L5.2 9.4V12Z" fill="#e02020"/><text x="2.6" y="4.8" font-family="Liberation Sans,sans-serif" font-size="5.6" font-weight="bold" fill="#1c28d8">Y</text><text x="8.4" y="12" font-family="Liberation Sans,sans-serif" font-size="5.6" font-weight="bold" fill="#e02020">X</text></svg></div>
<div class="tl" style="left:79.5px;top:254.6px;transform:scaleX(0.8791)">XY Grid Plane</div>
<div class="ic" style="left:63.5px;top:266.74px"><svg width="12" height="12" viewBox="0 0 12 12"><path d="M0.8 10.7V4" stroke="#3c8c20" stroke-width="1" fill="none"/><path d="M0.8 2.8L2.3 5.2H-0.7Z" fill="#3c8c20"/><path d="M0.8 10.7H5.8" stroke="#1c28d8" stroke-width="1" fill="none"/><path d="M7.6 10.7L5.2 9.4V12Z" fill="#1c28d8"/><text x="2.6" y="4.8" font-family="Liberation Sans,sans-serif" font-size="5.6" font-weight="bold" fill="#3c8c20">Z</text><text x="8.4" y="12" font-family="Liberation Sans,sans-serif" font-size="5.6" font-weight="bold" fill="#1c28d8">Y</text></svg></div>
<div class="tl" style="left:79.5px;top:266.64px;transform:scaleX(0.8845)">YZ Grid Plane</div>
<div class="ic" style="left:63.5px;top:278.78px"><svg width="12" height="12" viewBox="0 0 12 12"><path d="M0.8 10.7V4" stroke="#3c8c20" stroke-width="1" fill="none"/><path d="M0.8 2.8L2.3 5.2H-0.7Z" fill="#3c8c20"/><path d="M0.8 10.7H5.8" stroke="#e02020" stroke-width="1" fill="none"/><path d="M7.6 10.7L5.2 9.4V12Z" fill="#e02020"/><text x="2.6" y="4.8" font-family="Liberation Sans,sans-serif" font-size="5.6" font-weight="bold" fill="#3c8c20">Z</text><text x="8.4" y="12" font-family="Liberation Sans,sans-serif" font-size="5.6" font-weight="bold" fill="#e02020">X</text></svg></div>
<div class="tl" style="left:79.5px;top:278.68px;transform:scaleX(0.8845)">ZX Grid Plane</div>
<div class="eb" style="left:38.25px;top:293.62px"><i></i></div>
<div class="ic" style="left:49.25px;top:290.82px"><svg width="12" height="12" viewBox="0 0 12 12"><path d="M0.9 6L3.4 1.6H8.6L11.1 6L8.6 10.6H3.4Z" fill="#fff" stroke="#111" stroke-width="1.1" stroke-linejoin="round"/><circle cx="6" cy="6.1" r="4.3" fill="none" stroke="#111" stroke-width="0.9"/><path d="M2.8 6.6C3.6 3 5 3 6 6.1S8.4 9.4 9.2 5.8" fill="none" stroke="#d83030" stroke-width="1"/></svg></div>
<div class="tl" style="left:65.5px;top:290.72px;transform:scaleX(0.8931)">Sources</div>
<div class="ic" style="left:63.5px;top:302.86px"><svg width="12" height="12" viewBox="0 0 12 12"><path d="M6 0.2C7.4 1.6 9.2 3.4 10.4 4.6C10.6 5.2 10 5.4 9.4 5.4H2.6C2 5.4 1.4 5.2 1.6 4.6C2.8 3.4 4.6 1.6 6 0.2Z" fill="#e81818"/><rect x="5.2" y="5.4" width="1.7" height="4.4" fill="#6c3420"/><rect x="5.3" y="10" width="1.5" height="1.4" fill="#222"/></svg></div>
<div class="tl" style="left:79.5px;top:302.76px;transform:scaleX(0.8891)">Lumped Sources</div>
<div class="ic" style="left:63.5px;top:314.9px"><svg width="12" height="12" viewBox="0 0 12 12"><path d="M6 0.2C7.4 1.6 9.2 3.4 10.4 4.6C10.6 5.2 10 5.4 9.4 5.4H2.6C2 5.4 1.4 5.2 1.6 4.6C2.8 3.4 4.6 1.6 6 0.2Z" fill="#f4b010"/><rect x="5.2" y="5.4" width="1.7" height="4.4" fill="#a85c18"/><rect x="5.3" y="10" width="1.5" height="1.4" fill="#222"/></svg></div>
<div class="tl" style="left:79.5px;top:314.8px;transform:scaleX(0.8901)">Lumped Loads</div>
<div class="ic" style="left:63.5px;top:326.94px"><svg width="12" height="12" viewBox="0 0 12 12"><rect x="1.4" y="1.4" width="9.4" height="9.2" fill="#fff" stroke="#f08838" stroke-width="1.1"/><path d="M1.6 1.6L10.6 10.4M10.6 1.6L1.6 10.4" stroke="#f07830" stroke-width="0.8"/></svg></div>
<div class="tl" style="left:79.5px;top:326.84px;transform:scaleX(0.9162)">Waveguide Sources</div>
<div class="ic" style="left:63.5px;top:338.98px"><svg width="12" height="12" viewBox="0 0 12 12"><path d="M4 0.9H11.4V6.9H4Z" fill="#c8c0e0" stroke="#e820c8" stroke-width="0.9"/><path d="M0.7 4.6L4 0.9M8 4.6L11.4 0.9M8 10.9L11.4 6.9M0.7 10.9L4 6.9" fill="none" stroke="#3c2c58" stroke-width="0.9"/><path d="M0.7 4.6H8V10.9H0.7Z" fill="none" stroke="#3c2c58" stroke-width="0.9"/></svg></div>
<div class="tl" style="left:79.5px;top:338.88px;transform:scaleX(0.9202)">Plane Waves</div>
<div class="ic" style="left:63.5px;top:351.02px"><svg width="12" height="12" viewBox="0 0 12 12"><path d="M4 0.9H11.4V6.9H4Z" fill="#c8d0b0" stroke="#78904c" stroke-width="0.9"/><path d="M0.7 4.6L4 0.9M8 4.6L11.4 0.9M8 10.9L11.4 6.9M0.7 10.9L4 6.9" fill="none" stroke="#4c5c2c" stroke-width="0.9"/><path d="M0.7 4.6H8V10.9H0.7Z" fill="none" stroke="#4c5c2c" stroke-width="0.9"/></svg></div>
<div class="tl" style="left:79.5px;top:350.92px;transform:scaleX(0.8753)">Gaussian Beams</div>
<div class="ic" style="left:63.5px;top:363.06px"><svg width="12" height="12" viewBox="0 0 12 12"><rect x="1.2" y="1.2" width="9.6" height="9.4" fill="#fff" stroke="#3c9c28" stroke-width="1.3"/><path d="M1.6 1.6L10.6 10.4M10.6 1.6L1.6 10.4" stroke="#487838" stroke-width="0.8"/></svg></div>
<div class="tl" style="left:79.5px;top:362.96px;transform:scaleX(0.8848)">Distributed Sources</div>
<div class="eb" style="left:38.25px;top:377.9px"><i></i></div>
<div class="ic" style="left:49.25px;top:375.1px"><svg width="12" height="12" viewBox="0 0 12 12"><defs><linearGradient id="go" x1="0" y1="0" x2="0" y2="1"><stop offset="0" stop-color="#909090"/><stop offset="1" stop-color="#d8d8d8"/></linearGradient></defs><rect x="0" y="0.4" width="12" height="11.2" fill="url(#go)"/><path d="M0 11.6V8C2 3 3.6 3 4.8 6.6S8 10 9.4 4.4L12 1V11.6Z" fill="#a4d83c"/><path d="M0 8C2 3 3.6 3 4.8 6.6S8 10 9.4 4.4L12 1" stroke="#e8f08c" stroke-width="0.8" fill="none"/><rect x="0" y="10.6" width="12" height="1" fill="#6ca820"/></svg></div>
<div class="tl" style="left:65.5px;top:375px;transform:scaleX(0.8806)">Observables</div>
<div class="ic" style="left:63.5px;top:387.14px"><svg width="12" height="12" viewBox="0 0 12 12"><path d="M6 0.2C7.4 1.6 9.2 3.4 10.4 4.6C10.6 5.2 10 5.4 9.4 5.4H2.6C2 5.4 1.4 5.2 1.6 4.6C2.8 3.4 4.6 1.6 6 0.2Z" fill="#14d814"/><rect x="5.2" y="5.4" width="1.7" height="4.4" fill="#1c5c1c"/><rect x="5.3" y="10" width="1.5" height="1.4" fill="#222"/></svg></div>
<div class="tl" style="left:79.5px;top:387.04px;transform:scaleX(0.8707)">Field Probes</div>
<div class="ic" style="left:63.5px;top:399.18px"><svg width="12" height="12" viewBox="0 0 12 12"><path d="M1 4.6L4 2.2V9L1 11.4Z" fill="#fff" stroke="#b8b8b8" stroke-width="0.5"/><path d="M3 4.2L6 1.8V8.6L3 11Z" fill="#fff" stroke="#b0b0b0" stroke-width="0.5"/><path d="M6.2 3.6L10.6 0.6V7L6.2 10.4Z" fill="#2c2ce8"/><path d="M6.2 3.6L8 2.4V9L6.2 10.4Z" fill="#f8a818"/><path d="M8 2.4L9.2 1.6V8L8 9Z" fill="#d838c8"/></svg></div>
<div class="tl" style="left:79.5px;top:399.08px;transform:scaleX(0.8631)">Field Sensors</div>
<div class="ic" style="left:63.5px;top:411.22px"><svg width="12" height="12" viewBox="0 0 12 12"><path d="M4 0.9H11.4V6.9H4Z" fill="#c8d8e8" stroke="#2c88e0" stroke-width="0.9"/><path d="M0.7 4.6L4 0.9M8 4.6L11.4 0.9M8 10.9L11.4 6.9M0.7 10.9L4 6.9" fill="none" stroke="#111" stroke-width="0.9"/><path d="M0.7 4.6H8V10.9H0.7Z" fill="none" stroke="#111" stroke-width="0.9"/><path d="M0.8 10.6L4 6.6" stroke="#2c88e0" stroke-width="0.9"/></svg></div>
<div class="tl" style="left:79.5px;top:411.12px;transform:scaleX(0.8622)">Far Fields</div>
<div class="ic" style="left:63.5px;top:423.26px"><svg width="12" height="12" viewBox="0 0 12 12"><path d="M4 0.9H11.4V6.9H4Z" fill="#d0c8e8" stroke="#6020b0" stroke-width="0.9"/><path d="M0.7 4.6L4 0.9M8 4.6L11.4 0.9M8 10.9L11.4 6.9M0.7 10.9L4 6.9" fill="none" stroke="#6c2cc0" stroke-width="0.9"/><path d="M0.7 4.6H8V10.9H0.7Z" fill="none" stroke="#6c2cc0" stroke-width="0.9"/><path d="M0.8 5.2H8V10.6H0.8Z" fill="none" stroke="#4858d8" stroke-width="0.9"/></svg></div>
<div class="tl" style="left:79.5px;top:423.16px;transform:scaleX(0.8906)">Huygens Surfaces</div>
<div class="ic" style="left:63.5px;top:435.3px"><svg width="12" height="12" viewBox="0 0 12 12"><path d="M6 0.6L8.4 3.4H3.6Z" fill="#f49c10"/><rect x="5.5" y="3.4" width="1" height="3" fill="#8c5010"/><path d="M2.6 4.6L5.0 7.3999999999999995H0.20000000000000018Z" fill="#e01818"/><rect x="2.1" y="7.3999999999999995" width="1" height="3" fill="#6c2c18"/><path d="M9.6 4.6L12.0 7.3999999999999995H7.199999999999999Z" fill="#14c814"/><rect x="9.1" y="7.3999999999999995" width="1" height="3" fill="#1c5c1c"/></svg></div>
<div class="tl" style="left:79.5px;top:435.2px;transform:scaleX(0.8766)">Port Definitions</div>
<div class="ic" style="left:63.5px;top:447.34px"><svg width="12" height="12" viewBox="0 0 12 12"><path d="M6 0.6L11.2 3.2V8.6L6 11.6L0.8 8.6V3.2Z" fill="#b8b0b0" stroke="#706868" stroke-width="0.6"/><path d="M0.8 3.2L6 5.8V11.6L0.8 8.6Z" fill="#8c8488"/><g><rect x="2" y="5.4" width="1.4" height="1.4" fill="#f4b020"/><rect x="4" y="7.6" width="1.4" height="1.4" fill="#e838c8"/><rect x="7" y="6.2" width="1.4" height="1.4" fill="#f4e040"/><rect x="9" y="4.4" width="1.3" height="1.4" fill="#e838c8"/><rect x="7.6" y="8.4" width="1.4" height="1.4" fill="#f49820"/><rect x="4.6" y="2.2" width="1.4" height="1.2" fill="#f4d030"/><rect x="7" y="3" width="1.4" height="1.2" fill="#f080d8"/><rect x="2.4" y="8" width="1.2" height="1.2" fill="#f4d030"/></g></svg></div>
<div class="tl" style="left:79.5px;top:447.24px;transform:scaleX(0.8786)">Domain Energy</div>
<div class="ic" style="left:63.5px;top:459.38px"><svg width="12" height="12" viewBox="0 0 12 12"><path d="M0 9.8C2 8.6 2.6 2 5 1.6S8 3 9 4" stroke="#7030c8" stroke-width="0.9" fill="none"/><rect x="5" y="4.4" width="6.6" height="7.2" rx="0.6" fill="#c8c8c8" stroke="#585858" stroke-width="0.8"/><g fill="#e828b8"><rect x="6.2" y="5.6" width="1.8" height="1.8"/><rect x="8.8" y="5.6" width="1.8" height="1.8"/><rect x="6.2" y="8.4" width="1.8" height="1.8"/><rect x="8.8" y="8.4" width="1.8" height="1.8"/></g></svg></div>
<div class="tl" style="left:79.5px;top:459.28px;transform:scaleX(0.8780)">Periodic Characteristics</div>
<div class="ic" style="left:63.5px;top:471.42px"><svg width="12" height="12" viewBox="0 0 12 12"><rect x="0" y="0.4" width="8.6" height="8.6" fill="#0c0c0c"/><path d="M0.6 8.4C2.4 7 3 1.8 5 1.8S7.4 3.6 8 5" stroke="#f8c010" stroke-width="1.3" fill="none"/><rect x="5.4" y="4.8" width="6.2" height="7" rx="0.5" fill="#e0dcc8" stroke="#585858" stroke-width="0.7"/><path d="M6.8 7H10M6.8 8.6H10M6.8 10.2H9" stroke="#a8a490" stroke-width="0.5"/></svg></div>
<div class="tl" style="left:79.5px;top:471.32px;transform:scaleX(0.9028)">Data Manager</div></div>
<div id="persp">Perspective</div>
</body></html>
